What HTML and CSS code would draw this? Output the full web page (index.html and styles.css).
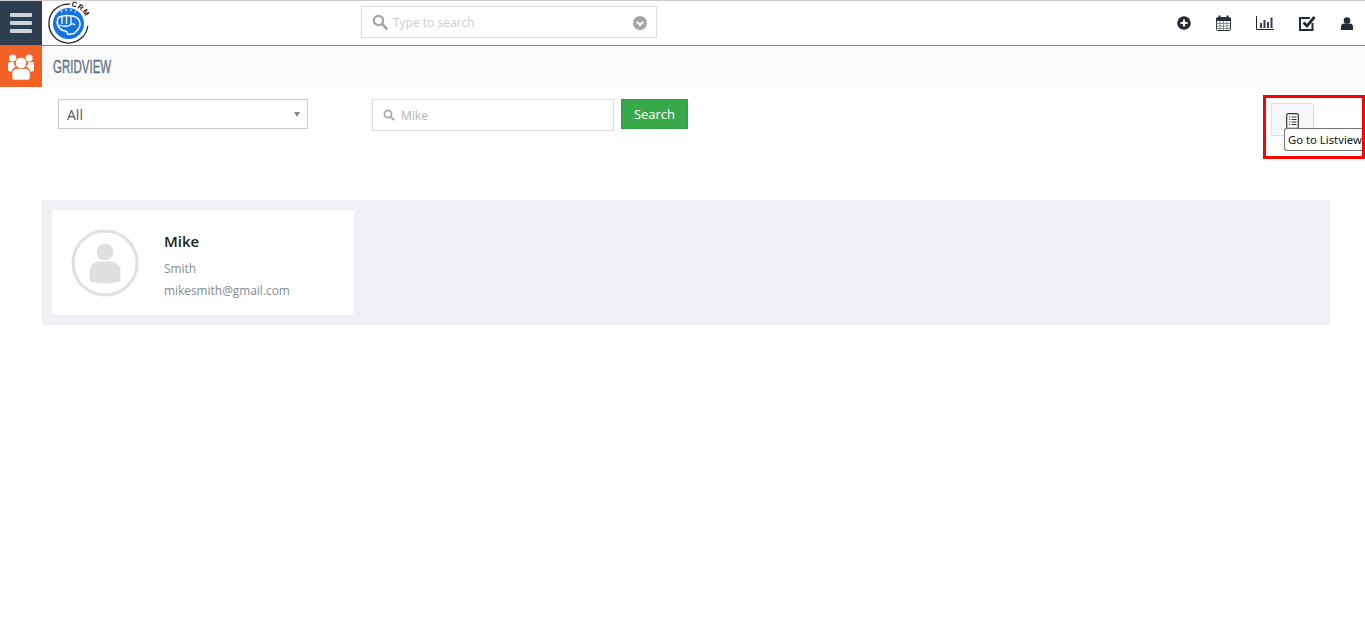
FILE: index.html
```html
<!DOCTYPE html>
<html lang="en">
<head>
<meta charset="utf-8">
<title>Gridview</title>
<link rel="stylesheet" href="styles.css">
</head>
<body>
<header class="topbar">
  <button class="menu-tile" aria-label="Menu"><span></span><span></span><span></span></button>
  <div class="logo">
    <svg width="46" height="44" viewBox="0 0 46 44">
      <circle cx="21.500" cy="22.500" r="15.500" fill="#1173e6"/>
      <path d="M23 3.100A19.500 19.500 0 1 0 40.800 25" fill="none" stroke="#222" stroke-width="1.300"/>
      <defs><path id="crm-arc" d="M24 5.200A17.500 17.500 0 0 1 39.500 25"/></defs>
      <g transform="translate(0 2)">
        <path d="M10.500 20c-.5-4 1-6 3-6.500l5-1 7 .5c4 .8 7 3 7.500 7 .3 3-1 5.500-3 7.500l-3 3-6 1-1.500-3c-4-.5-8-3-9.500-8.500z" fill="none" stroke="#fff" stroke-width="1.500"/>
        <path d="M15 14v7M19.500 13v8M24 13.500v7.500M12 22c4 1.500 9 1.500 12-.5 1.500-1 3-.5 4 .5" fill="none" stroke="#fff" stroke-width="1.300"/>
        <path d="M14 7l1 2.500M19 5.800l.3 2.500M24 5.800l-.3 2.500M29 7.500l-1 2" stroke="#fff" stroke-width="1"/>
      </g>
      <text class="logo-text"><textPath href="#crm-arc">CRM</textPath></text>
    </svg>
  </div>
  <div class="global-search">
    <svg class="g-lens" width="16" height="16" viewBox="0 0 16 16"><circle cx="6.500" cy="6.500" r="4.700" fill="none" stroke="#a5a5a5" stroke-width="2.200"/><path d="M10 10l4.500 4.500" stroke="#a5a5a5" stroke-width="2.600" stroke-linecap="round"/></svg>
    <span class="g-placeholder">Type to search</span>
    <svg class="g-chevron" width="14" height="14" viewBox="0 0 14 14"><circle cx="7" cy="7" r="7" fill="#a8a5a5"/><path d="M3.800 5.800L7 9l3.200-3.200" fill="none" stroke="#fff" stroke-width="2"/></svg>
  </div>
  <nav class="top-icons">
    <svg width="14" height="14" viewBox="0 0 14 14"><circle cx="7" cy="7" r="6.800" fill="#222c36"/><path d="M7 3.500v7M3.500 7h7" stroke="#fff" stroke-width="2"/></svg>
    <svg width="15" height="16" viewBox="0 0 15 16"><path d="M1.500 2.500h12a1 1 0 0 1 1 1v11a1 1 0 0 1-1 1h-12a1 1 0 0 1-1-1v-11a1 1 0 0 1 1-1z" fill="#fff" stroke="#2b3038"/><path d="M.5 3h14v3H.5z" fill="#2b3038"/><path d="M3.500 .5v3M11.500 .5v3" stroke="#2b3038" stroke-width="2"/><path d="M.5 8.500h14M.5 11h14M.5 13.500h14M4 6v9M7.500 6v9M11 6v9" stroke="#777" stroke-width=".8"/></svg>
    <svg width="18" height="14" viewBox="0 0 18 14"><path d="M.5 0v13.500H18" fill="none" stroke="#222c36"/><path d="M4 7h2v5H4zM7.500 4h2v8h-2zM11 6h2v6h-2zM14.500 1.500h2V12h-2z" fill="#3c3a5a"/></svg>
    <svg width="17" height="17" viewBox="0 0 17 17"><path d="M13.500 8v7H1V3h10" fill="none" stroke="#222c36" stroke-width="2"/><path d="M4.500 7.500L8 11l7.500-9" fill="none" stroke="#222c36" stroke-width="2.800"/></svg>
    <svg width="12" height="13" viewBox="0 0 12 13"><circle cx="6" cy="3.500" r="3.300" fill="#222c36"/><path d="M0 13V9.500C0 7.500 1.500 6.500 3 6.500h6c1.500 0 3 1 3 3V13z" fill="#222c36"/></svg>
  </nav>
</header>

<section class="titlebar">
  <div class="group-tile">
    <svg width="28" height="26" viewBox="0 0 28 26" fill="#fff">
      <circle cx="5.700" cy="4" r="3.600"/><circle cx="22" cy="4" r="3.600"/>
      <path d="M1 9.500C1 8.500 2 8 3 8h3.500c.3 2 1 3.500 2.500 4.800-2.500 1-4 2.500-4 4.700H3c-1 0-2-1-2-2z"/>
      <path d="M27 9.500c0-1-1-1.500-2-1.500h-3.500c-.3 2-1 3.500-2.500 4.800 2.500 1 4 2.500 4 4.700h2c1 0 2-1 2-2z"/>
      <circle cx="14" cy="9" r="5.800" stroke="#f26125" stroke-width=".8"/>
      <path d="M5 19.500c0-3 2.500-5 5-5h8c2.500 0 5 2 5 5v4c0 1.500-1 2.500-2.500 2.500h-13C6 26 5 25 5 23.500z" stroke="#f26125" stroke-width=".6"/>
    </svg>
  </div>
  <h1 class="page-title">GRIDVIEW</h1>
</section>

<section class="filters">
  <div class="select-box"><span>All</span><i class="caret"></i></div>
  <div class="search-box">
    <svg width="12" height="12" viewBox="0 0 12 12"><circle cx="5" cy="5" r="3.600" fill="none" stroke="#a9a9a9" stroke-width="1.700"/><path d="M7.700 7.700L11 11" stroke="#a9a9a9" stroke-width="2"/></svg>
    <span>Mike</span>
  </div>
  <button class="search-btn">Search</button>
  <div class="view-toggle">
    <button class="list-btn" aria-label="Go to Listview">
      <svg width="13" height="16" viewBox="0 0 13 16"><rect x=".7" y=".7" width="11.600" height="14.600" rx="1.500" fill="#fff" stroke="#333" stroke-width="1.200"/><path d="M3 4h1M3 6.500h1M3 9h1M3 11.500h1M5.500 4h5M5.500 6.500h5M5.500 9h5M5.500 11.500h5" stroke="#333" stroke-width="1.200"/></svg>
    </button>
    <div class="tooltip">Go to Listview</div>
  </div>
</section>
<div class="highlight"></div>

<main class="grid-area">
  <article class="card">
    <svg class="avatar" width="68" height="68" viewBox="0 0 68 68">
      <circle cx="34" cy="34" r="32" fill="#fff" stroke="#e0e0e0" stroke-width="3"/>
      <circle cx="34" cy="23" r="8.500" fill="#e0e0e0"/>
      <path d="M18.500 42c0-6 5-9.500 10-9.500h11c5 0 10 3.500 10 9.500v10.500c-9 2.500-22 2.500-31 0z" fill="#e0e0e0"/>
    </svg>
    <div class="card-text">
      <h2>Mike</h2>
      <p class="last">Smith</p>
      <p class="mail">mikesmith@gmail.com</p>
    </div>
  </article>
</main>
</body>
</html>
```
FILE: styles.css
```css
* { box-sizing: border-box; }
html, body { margin: 0; padding: 0; }
body {
  position: relative;
  height: 633px;
  overflow: hidden;
  background: #fff;
  font-family: "Open Sans", sans-serif;
  color: #333;
}
.topbar {
  display: flex;
  align-items: center;
  height: 46px;
  border-top: 1px solid #ccc;
  border-bottom: 1px solid #e0623a;
  background: #fff;
}
.menu-tile {
  display: flex;
  flex-direction: column;
  justify-content: center;
  gap: 4px;
  width: 42px;
  height: 44px;
  padding: 0 10px;
  border: 0;
  background: #2c3e50;
}
.menu-tile span {
  display: block;
  height: 4px;
  border-radius: 1px;
  background: #cfd4da;
}
.logo { width: 46px; height: 44px; margin-left: 5px; }
.logo svg { overflow: visible; }
.logo-text { font: bold 7.5px "Liberation Sans", sans-serif; letter-spacing: .6px; fill: #222; }
.global-search {
  display: flex;
  align-items: center;
  align-self: flex-start;
  width: 296px;
  height: 32px;
  margin: 5px 0 0 268px;
  padding: 0 9px 0 10px;
  border: 1px solid #ddd;
}
.g-placeholder { flex: 1; margin-left: 5px; font-size: 12px; color: #ccc; }
.g-chevron { margin-top: 2px; }
.top-icons {
  display: flex;
  align-items: center;
  margin-left: auto;
  height: 100%;
}
.top-icons svg:nth-child(1) { margin-right: 25px; }
.top-icons svg:nth-child(2) { margin-right: 25px; }
.top-icons svg:nth-child(3) { margin-right: 25px; }
.top-icons svg:nth-child(4) { margin-right: 25px; }
.top-icons svg:nth-child(5) { margin-right: 12px; }
.titlebar {
  display: flex;
  align-items: center;
  height: 41px;
  background: #fafafa;
}
.group-tile {
  display: flex;
  align-items: center;
  justify-content: center;
  width: 42px;
  height: 41px;
  background: #f26125;
}
.page-title {
  margin: 1px 0 0 11px;
  font: 400 18px "Liberation Sans", "Roboto", sans-serif;
  -webkit-text-stroke: .3px #5d7186;
  color: #5d7186;
  transform: scaleX(.64);
  transform-origin: left center;
}
.filters {
  display: flex;
  align-items: flex-start;
  height: 113px;
  padding: 12px 0 0 58px;
}
.select-box {
  display: flex;
  align-items: center;
  justify-content: space-between;
  width: 250px;
  height: 30px;
  padding: 0 8px;
  border: 1px solid #ccc;
  font-size: 14px;
  color: #555;
}
.caret {
  width: 0;
  height: 0;
  margin-right: -1px;
  border-left: 3px solid transparent;
  border-right: 3px solid transparent;
  border-top: 5px solid #888;
}
.search-box {
  display: flex;
  align-items: center;
  gap: 6px;
  width: 242px;
  height: 32px;
  margin-left: 64px;
  padding-left: 10px;
  border: 1px solid #ddd;
  font-size: 12px;
  color: #b5b5b5;
}
.search-btn {
  width: 67px;
  height: 30px;
  margin-left: 7px;
  border: 1px solid #2f9e44;
  background: #37a949;
  color: #fff;
  font: 13px "Open Sans", sans-serif;
}
.view-toggle { margin: 4px 0 0 583px; position: relative; }
.list-btn {
  display: flex;
  justify-content: center;
  padding: 9px 0 0;
  width: 43px;
  height: 33px;
  border: 1px solid #ddd;
  border-radius: 2px;
  background: #f7f7f7;
}
.tooltip {
  position: absolute;
  top: 25px;
  left: 13px;
  width: 81px;
  height: 23px;
  padding-left: 3px;
  border: 1px solid #767676;
  border-right: 0;
  border-radius: 3px 0 0 3px;
  background: #fff;
  font: 11.3px/21px "Noto Sans", "Open Sans", sans-serif;
  color: #111;
  white-space: nowrap;
  overflow: hidden;
}
.highlight {
  position: absolute;
  top: 95px;
  left: 1263px;
  width: 102px;
  height: 64px;
  border: 3px solid #f00;
  pointer-events: none;
}
.grid-area {
  width: 1288px;
  height: 125px;
  margin-left: 42px;
  padding: 10px;
  background: #eff0f5;
}
.card {
  display: flex;
  width: 302px;
  height: 105px;
  padding: 19px 0 0 19px;
  border-radius: 4px;
  background: #fff;
}
.avatar { flex: none; }
.card-text { margin-left: 25px; }
.card-text h2 {
  margin: 2px 0 0;
  font: 600 15px/20px "Open Sans", sans-serif;
  color: #222;
}
.card-text p {
  margin: 0;
  font-size: 11.9px;
  line-height: 22px;
  color: #828b94;
}
.card-text .last { margin-top: 6px; }
```
